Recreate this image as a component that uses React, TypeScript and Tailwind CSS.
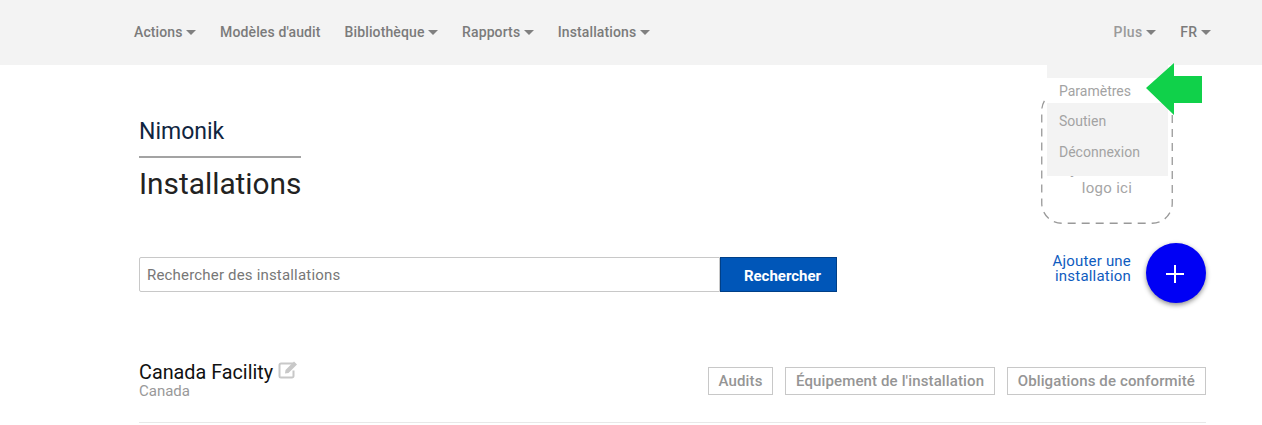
const font = { fontFamily: "Roboto, 'Liberation Sans', sans-serif" };

function Caret() {
  return <span className="ml-[3.5px] inline-block h-0 w-0 border-x-[5.5px] border-t-[5.5px] border-x-transparent border-t-[#808080]" />;
}

function NavItem({ label, caret = true, light = false, wide = false }: { label: string; caret?: boolean; light?: boolean; wide?: boolean }) {
  return (
    <a className={`flex items-center text-sm font-medium ${wide ? "tracking-[0.4px]" : "tracking-[0.12px]"} ${light ? "text-[#9a9a9a]" : "text-[#7b7b7b]"}`}>
      {label}
      {caret && <Caret />}
    </a>
  );
}

function Tag({ label }: { label: string }) {
  return (
    <a className="flex h-[28px] items-center border border-[#c8c8c8] px-[10px] text-[15px] font-medium tracking-[0.13px] text-[#959595]">
      {label}
    </a>
  );
}

export default function App() {
  return (
    <div style={font} className="relative h-[425px] w-[1262px] overflow-hidden bg-white">
      <header className="flex h-[65px] items-center justify-between bg-[#f3f3f3] pb-[1px] pl-[134px] pr-[51px]">
        <nav className="flex items-center gap-[24px]">
          <NavItem label="Actions" />
          <NavItem label="Modèles d'audit" caret={false} />
          <NavItem label="Bibliothèque" />
          <NavItem label="Rapports" />
          <NavItem label="Installations" />
        </nav>
        <nav className="flex items-center gap-[24px]">
          <NavItem label="Plus" light wide />
          <NavItem label="FR" wide />
        </nav>
      </header>

      <main className="pl-[139px] pr-[56px]">
        <div className="flex items-start justify-between">
          <div className="inline-block pt-[53px]">
            <div className="border-b-2 border-[#a3a3a3] pb-[10px] text-[23px] leading-[28px] text-[#0f2540]">Nimonik</div>
            <h1 className="pt-[7px] text-[29.8px] leading-[38px] text-[#222222]">Installations</h1>
          </div>
          <div className="relative mr-[33px] mt-[25px] flex h-[134px] w-[132px] items-end justify-center pb-[26px] text-center text-[15px] leading-[19px] tracking-[0.3px] text-[#a5a5a5]">
            <svg className="absolute inset-0" width="132" height="134" viewBox="0 0 132 134" fill="none">
              <rect x="0.75" y="0.75" width="130.5" height="132.5" rx="20" stroke="#999999" strokeWidth="1.3" strokeDasharray="8 6" />
            </svg>
            <span className="relative">
              Ajoutez votre
              <br />
              logo ici
            </span>
          </div>
        </div>

        <div className="mt-[19px] flex items-center justify-between">
          <div className="mt-[2px] flex h-[35px] w-[698px]">
            <input
              readOnly
              placeholder="Rechercher des installations"
              className="h-full min-w-0 flex-1 rounded-l-[2px] border border-[#c8c8c8] px-[7px] pt-[1px] text-[15px] tracking-[0.18px] text-[#777777] placeholder:text-[#777777]"
            />
            <button className="h-full w-[117px] border border-[#003f87] bg-[#0056b8] pl-[8px] pt-[4px] text-[15px] font-bold text-white">
              Rechercher
            </button>
          </div>
          <div className="flex items-center gap-[15px]">
            <a className="mb-[9px] text-right text-[15px] leading-[15px] tracking-[0.2px] text-[#0f5cc0]">
              Ajouter une
              <br />
              installation
            </a>
            <button className="flex h-[60px] w-[60px] items-center justify-center rounded-full bg-[#0000f5] shadow-[0_2px_5px_rgba(0,0,0,0.45)]">
              <svg className="mr-[2px] mt-[2px]" width="18" height="18" viewBox="0 0 18 18" fill="none" stroke="#fff" strokeWidth="2">
                <path d="M9 0v18M0 9h18" />
              </svg>
            </button>
          </div>
        </div>

        <div className="mt-[57px] flex items-start justify-between border-b border-[#e8e8e8] pb-[23px]">
          <div>
            <div className="flex h-[23px] items-center gap-[5px] pt-[3px] text-[19.8px] leading-[22px] text-[#111111]">
              Canada Facility
              <svg className="mb-[7px]" width="20" height="19" viewBox="0 0 20 18" fill="none">
                <path d="M15 3H3a1.5 1.5 0 0 0-1.5 1.5v11A1.5 1.5 0 0 0 3 17h11a1.5 1.5 0 0 0 1.5-1.5V10" stroke="#c8c8c8" strokeWidth="2" />
                <path d="M7.5 9.5 16 1l3 3-8.5 8.5-3.5.5z" fill="#c8c8c8" />
              </svg>
            </div>
            <div className="text-[15px] leading-[16px] text-[#999999]">Canada</div>
          </div>
          <div className="mt-[7px] flex gap-[11.5px]">
            <Tag label="Audits" />
            <Tag label="Équipement de l'installation" />
            <Tag label="Obligations de conformité" />
          </div>
        </div>
      </main>

      <div className="absolute left-[1047px] top-[65px] w-[121px] text-sm text-[#a3a3a3]">
        <div className="h-[13px] bg-[#f3f3f3]" />
        <div className="flex h-[25px] items-center bg-white pl-[12px]">Paramètres</div>
        <div className="flex h-[73px] flex-col gap-[13px] bg-[#f3f3f3] pl-[12px] pt-[9px]">
          <span className="leading-[18px]">Soutien</span>
          <span className="leading-[18px]">Déconnexion</span>
        </div>
      </div>

      <svg className="absolute left-[1146px] top-[63px]" width="56" height="52" viewBox="0 0 56 52">
        <path d="M0 25 28 0V13H56V40H28V52Z" fill="#10d14a" />
      </svg>
    </div>
  );
}
